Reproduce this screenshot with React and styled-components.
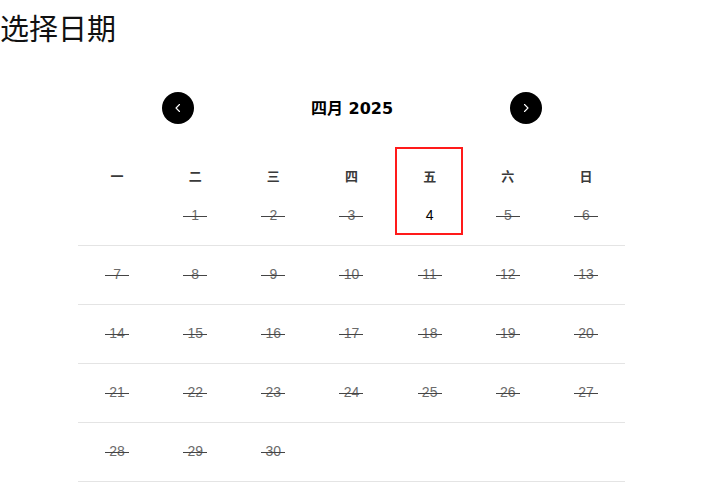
import React from "react";
import styled, { createGlobalStyle } from "styled-components";

const Global = createGlobalStyle`
  html, body { margin: 0; padding: 0; background: #fff; }
  body { font-family: "DejaVu Sans", "Noto Sans CJK SC", sans-serif; color: #000; }
`;

const Page = styled.div`
  width: 716px;
`;

const Title = styled.h1`
  margin: 7px 0 0 0;
  font-family: "Noto Sans CJK SC", sans-serif;
  font-weight: 400;
  font-size: 29px;
  line-height: 40px;
  color: #111;
`;

const Calendar = styled.div`
  margin: 45px 0 0 78px;
  width: 547px;
`;

const Nav = styled.div`
  display: flex;
  align-items: center;
  justify-content: space-between;
  padding: 0 83px 0 84px;
  height: 32px;
`;

const NavButton = styled.button`
  width: 32px;
  height: 32px;
  border-radius: 50%;
  border: none;
  background: #000;
  color: #fff;
  padding: 0;
  display: flex;
  align-items: center;
  justify-content: center;
  cursor: pointer;
`;

const MonthTitle = styled.div`
  font-family: "DejaVu Sans", "Noto Sans CJK SC", sans-serif;
  font-weight: 700;
  font-size: 16px;
  line-height: 20px;
  padding-top: 2px;
`;

const Board = styled.div`
  position: relative;
  margin-top: 42px;
`;

const WeekRow = styled.div`
  display: grid;
  grid-template-columns: repeat(7, 1fr);
  height: 21px;
`;

const WeekDay = styled.div`
  text-align: center;
  font-family: "Noto Sans CJK SC", sans-serif;
  font-weight: 700;
  font-size: 13px;
  line-height: 20px;
  color: #3a3a3a;
`;

const DateRow = styled.div`
  display: grid;
  grid-template-columns: repeat(7, 1fr);
  border-bottom: 1px solid #e4e4e4;
`;

const DateCell = styled.div`
  height: 58px;
  padding-top: 18px;
  box-sizing: border-box;
  text-align: center;
  font-family: "Liberation Sans", Arial, sans-serif;
  font-size: 14px;
  line-height: 20px;
`;

const DateNum = styled.span`
  position: relative;
  display: inline-block;
  color: ${(p) => (p.$disabled ? "#6b6b6b" : "#000")};
  &::after {
    content: "";
    display: ${(p) => (p.$disabled ? "block" : "none")};
    position: absolute;
    left: 50%;
    top: 11px;
    width: 24px;
    height: 1px;
    margin-left: -12px;
    background: #444;
  }
`;

const Highlight = styled.div`
  position: absolute;
  left: 317px;
  top: -19px;
  width: 68px;
  height: 88px;
  box-sizing: border-box;
  border: 2px solid #ff1a1a;
  pointer-events: none;
`;

const Chevron = ({ dir }) => (
  <svg width="10" height="10" viewBox="0 0 10 10" fill="none">
    <path
      d={dir === "left" ? "M6.5 1.5 L3 5 L6.5 8.5" : "M3.5 1.5 L7 5 L3.5 8.5"}
      stroke="#fff"
      strokeWidth="1.1"
      strokeLinecap="round"
      strokeLinejoin="round"
    />
  </svg>
);

const weekdays = ["一", "二", "三", "四", "五", "六", "日"];

function buildWeeks() {
  const cells = [null];
  for (let d = 1; d <= 30; d++) cells.push(d);
  while (cells.length % 7) cells.push(null);
  const weeks = [];
  for (let i = 0; i < cells.length; i += 7) weeks.push(cells.slice(i, i + 7));
  return weeks;
}

export default function App() {
  const weeks = buildWeeks();
  return (
    <Page>
      <Global />
      <Title>选择日期</Title>
      <Calendar>
        <Nav>
          <NavButton aria-label="上个月">
            <Chevron dir="left" />
          </NavButton>
          <MonthTitle>四月 2025</MonthTitle>
          <NavButton aria-label="下个月">
            <Chevron dir="right" />
          </NavButton>
        </Nav>
        <Board>
          <WeekRow>
            {weekdays.map((w) => (
              <WeekDay key={w}>{w}</WeekDay>
            ))}
          </WeekRow>
          {weeks.map((week, wi) => (
            <DateRow key={wi}>
              {week.map((d, di) => (
                <DateCell key={di}>
                  {d && <DateNum $disabled={d !== 4}>{d}</DateNum>}
                </DateCell>
              ))}
            </DateRow>
          ))}
          <Highlight />
        </Board>
      </Calendar>
    </Page>
  );
}
